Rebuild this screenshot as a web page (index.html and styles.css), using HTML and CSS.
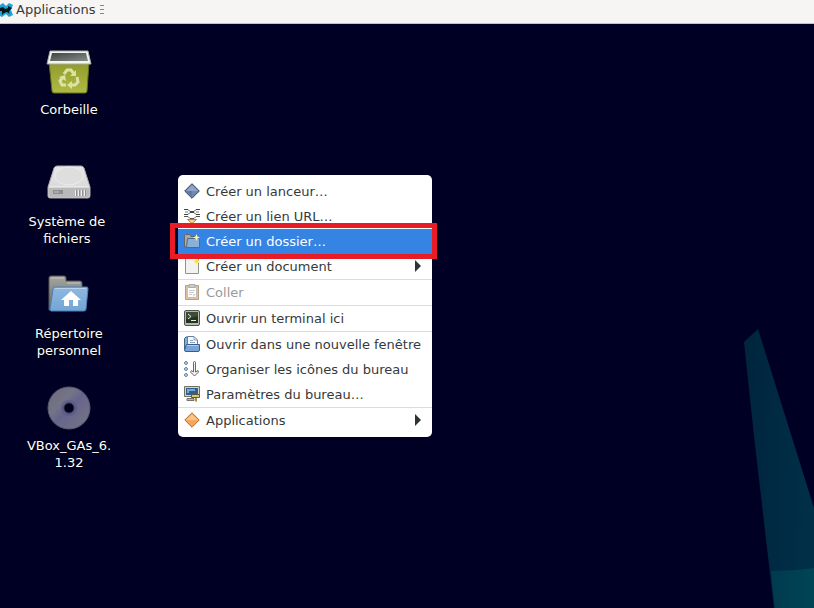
FILE: index.html
```html
<!DOCTYPE html>
<html lang="fr">
<head>
  <meta charset="UTF-8" />
  <title>Bureau</title>
  <link rel="stylesheet" href="styles.css">
</head>
<body>

  <!-- Wallpaper -->
  <svg class="wallpaper" viewBox="0 0 70 280" aria-hidden="true">
    <defs>
      <linearGradient id="fin" x1="0" y1="0" x2="1" y2="0.1">
        <stop offset="0.1" stop-color="#00253f" />
        <stop offset="1" stop-color="#003048" />
      </linearGradient>
      <linearGradient id="fin-base" x1="0" y1="0" x2="1" y2="0">
        <stop offset="0" stop-color="#003a50" />
        <stop offset="1" stop-color="#004555" />
      </linearGradient>
    </defs>
    <path d="M14 1 0 14 10 108 30 280H70V180Z" fill="url(#fin)" />
    <path d="M27 243Q50 243 70 240V280H31Z" fill="url(#fin-base)" />
  </svg>

  <!-- Panel -->
  <header class="panel">
    <button class="panel-button" type="button">
      <svg class="panel-logo" viewBox="0 0 13 16" aria-hidden="true">
        <path d="M0 3 3 1 6 4 9 1 13 3 11 8 13 13 9 15 6 12 2 15 0 14Z" fill="#1ba5d8" />
        <path d="M0 6 3 5 5 7 8 6 8 4 10 5 12 6 10 8 9 10 10 12 7 10 4 11 2 13 2 9 0 9Z" fill="#07151d" />
      </svg>
      Applications
    </button>
    <svg class="panel-handle" viewBox="0 0 4 9" aria-hidden="true">
      <path d="M0 .5H4M0 4.5H4M0 8.5H4" stroke="#888" />
    </svg>
  </header>

  <!-- Desktop icons -->
  <main class="desktop">
    <button class="desktop-icon" type="button">
      <svg viewBox="0 0 48 48" aria-hidden="true">
        <defs>
          <linearGradient id="bin" x1="0" y1="0" x2="0" y2="1">
            <stop offset="0" stop-color="#8f9a2c" />
            <stop offset="1" stop-color="#b0bb45" />
          </linearGradient>
          <linearGradient id="bin-inside" x1="0" y1="0" x2="1" y2="1">
            <stop offset="0" stop-color="#3f4542" />
            <stop offset="1" stop-color="#858c89" />
          </linearGradient>
        </defs>
        <path d="M4 14H44L42 43Q42 45 40 45H9Q7 45 7 43Z" fill="url(#bin)" stroke="#63701b" />
        <path d="M5 3H43L46 16H2Z" fill="#f3f4ed" stroke="#a7aa9e" />
        <path d="M7 5H41L43 13H5Z" fill="url(#bin-inside)" />
        <g fill="none" stroke="#dbe2a4" stroke-width="3">
          <path d="M19 26 22 22H26L29 26" />
          <path d="M32 29 33 34 30 37H26" />
          <path d="M21 37H17L15 33 18 29" />
        </g>
        <path d="M31 22V28H25ZM27 33V41L22 37ZM14 29 20 27 21 33Z" fill="#dbe2a4" />
      </svg>
      <span class="desktop-label">Corbeille</span>
    </button>

    <button class="desktop-icon" type="button">
      <svg viewBox="0 0 48 48" aria-hidden="true">
        <defs>
          <linearGradient id="disk" x1="0" y1="0" x2="0" y2="1">
            <stop offset="0" stop-color="#e6e6e6" />
            <stop offset="1" stop-color="#d4d4d4" />
          </linearGradient>
        </defs>
        <path d="M12 6H36Q38 6 39 8L45 27V36Q45 38 43 38H5Q3 38 3 36V27L9 8Q10 6 12 6Z" fill="url(#disk)" stroke="#aaa" />
        <ellipse cx="24" cy="16" rx="14" ry="9" fill="#dedede" stroke="#ececec" />
        <path d="M4 27H44V35Q44 37 42 37H6Q4 37 4 35Z" fill="#b9b9b9" />
        <path d="M4 27H44" stroke="#f6f6f6" />
        <path d="M8 30H18V34H8Z" fill="#8f8f8f" />
        <path d="M9 32H14" stroke="#c4c4c4" />
        <path d="M30.5 30V36M33.5 30V36M36.5 30V36M39.5 30V36" stroke="#f0f0f0" />
        <path d="M31.500 30V36M34.500 30V36M37.500 30V36M40.500 30V36" stroke="#8e8e8e" />
      </svg>
      <span class="desktop-label">Système de&nbsp;<br>fichiers&nbsp;</span>
    </button>

    <button class="desktop-icon" type="button">
      <svg viewBox="0 0 48 48" aria-hidden="true">
        <defs>
          <linearGradient id="home-front" x1="0" y1="0" x2="0" y2="1">
            <stop offset="0" stop-color="#8fb8de" />
            <stop offset="1" stop-color="#74a5d6" />
          </linearGradient>
          <linearGradient id="home-back" x1="0" y1="0" x2="0" y2="1">
            <stop offset="0" stop-color="#a6a6a2" />
            <stop offset="1" stop-color="#666864" />
          </linearGradient>
        </defs>
        <path d="M4 38V6Q4 4 6 4H19Q21 4 21 6V9H35Q37 9 37 11V36Z" fill="url(#home-back)" stroke="#555753" />
        <path d="M6 6H19M22 11H35" stroke="#c4c5c1" />
        <path d="M10 15H42Q43 15 43 17L41 37Q41 39 39 39H6Q5 39 5 37L8 17Q8 15 10 15Z" fill="url(#home-front)" stroke="#4a7fb5" />
        <path d="M10 16.5H41" stroke="#b9d3ed" />
        <path d="M26 19 36 28H33V34H28V28H24V34H19V28H16Z" fill="#fff" />
      </svg>
      <span class="desktop-label">Répertoire<br>personnel</span>
    </button>

    <button class="desktop-icon" type="button">
      <svg viewBox="0 0 48 48" aria-hidden="true">
        <defs>
          <linearGradient id="disc" x1="0" y1="0" x2="1" y2="1">
            <stop offset="0" stop-color="#6b6b7d" />
            <stop offset=".35" stop-color="#747486" />
            <stop offset=".5" stop-color="#67648c" />
            <stop offset="1" stop-color="#777785" />
          </linearGradient>
        </defs>
        <circle cx="24" cy="24" r="21" fill="url(#disc)" stroke="#5a5a68" />
        <circle cx="24" cy="24" r="8" fill="#57568a" opacity=".6" />
        <circle cx="24" cy="24" r="5" fill="#00001d" stroke="#34344e" />
      </svg>
      <span class="desktop-label">VBox_GAs_6.<br>1.32</span>
    </button>
  </main>

  <!-- Context menu -->
  <div class="menu" role="menu">
    <button class="menu-item" type="button" role="menuitem">
      <svg viewBox="0 0 16 16" aria-hidden="true">
        <path d="M8 .7 15.3 8 8 15.3 .7 8Z" fill="#7087b0" stroke="#34425f" />
        <path d="M8 2 14 8H2Z" fill="#8fa4c8" />
        <path d="M8 8V14L2 8Z" fill="#6078a3" />
      </svg>
      <span>Créer un lanceur…</span>
    </button>
    <button class="menu-item" type="button" role="menuitem">
      <svg viewBox="0 0 16 16" aria-hidden="true">
        <path d="M0 1.5H4L6 3.5H10L12 1.5H16M0 6.500H4L6 4.500H10L12 6.500H16" fill="none" stroke="#444843" />
        <path d="M0 8.5H4L6 10.5H10L12 8.5H16" fill="none" stroke="#555" />
        <path d="M1 4H4M12 4H15" stroke="#777b74" />
        <path d="M3.5 11.5H12.5L8 15.5Z" fill="#f8d49b" stroke="#d87713" />
      </svg>
      <span>Créer un lien URL…</span>
    </button>
    <button class="menu-item selected" type="button" role="menuitem">
      <svg viewBox="0 0 16 16" aria-hidden="true">
        <path d="M.5 14V2.5Q.5 1.500 1.500 1.500H6L7 3.500H13.500V14Z" fill="#a9aaa6" stroke="#656762" />
        <path d="M3.5 5.5H15.5V14.5H2.5Z" fill="#88b0d8" stroke="#4e6c8d" />
        <path d="M12.5 1 13.5 3.5 16 4.5 13.5 5.5 12.5 8 11.5 5.5 9 4.5 11.5 3.5Z" fill="#fff7ad" />
      </svg>
      <span>Créer un dossier…</span>
    </button>
    <button class="menu-item" type="button" role="menuitem" aria-haspopup="menu">
      <svg viewBox="0 0 16 16" aria-hidden="true">
        <path d="M1.5 .5H14.5V15.5H1.5Z" fill="#f2f2f0" stroke="#92948f" />
        <path d="M12.5 0 13.5 2.5 16 3.5 13.5 4.5 12.5 7 11.5 4.5 9 3.5 11.5 2.5Z" fill="#f8df32" stroke="#fff2a0" />
      </svg>
      <span>Créer un document</span>
      <i class="menu-arrow"></i>
    </button>
    <hr class="menu-separator">
    <button class="menu-item" type="button" role="menuitem" disabled>
      <svg viewBox="0 0 16 16" aria-hidden="true">
        <path d="M1.5 1.5H14.5V15.5H1.5Z" fill="#c39b62" stroke="#8f6228" />
        <path d="M3.5 3.5H12.5V13.5H3.5Z" fill="#fff" stroke="#999" />
        <path d="M5 .5H11V3.5H5Z" fill="#aaa" stroke="#777" />
        <path d="M5 6.5H11M5 8.5H10M5 10.5H8" stroke="#aaa" />
        <path d="M9 13V10H12Z" fill="#bbb" />
      </svg>
      <span>Coller</span>
    </button>
    <hr class="menu-separator">
    <button class="menu-item" type="button" role="menuitem">
      <svg viewBox="0 0 16 16" aria-hidden="true">
        <rect x=".5" y=".5" width="15" height="15" rx="1.5" fill="#b5b8ae" stroke="#50534c" />
        <path d="M2 2H14V13H2Z" fill="#243322" />
        <path d="M2 2H14V6L2 9Z" fill="#3c4c37" />
        <path d="M4 4 7 6.5 4 9M7 10.5H12" fill="none" stroke="#e7f0dd" />
      </svg>
      <span>Ouvrir un terminal ici</span>
    </button>
    <hr class="menu-separator">
    <button class="menu-item" type="button" role="menuitem">
      <svg viewBox="0 0 16 16" aria-hidden="true">
        <path d="M.5 13V2.5L2 1H5V13Z" fill="#8aaed3" stroke="#3d648f" />
        <path d="M3.5 .5H10L13.5 4V12H3.5Z" fill="#f5f7fa" stroke="#617f9f" />
        <path d="M10 .5V4H13.5M6 4.5H9M6 6.5H11" fill="none" stroke="#8da5bf" />
        <path d="M2.5 8.5H15.5V14Q15.5 15.5 14 15.5H2Q.5 15.5 .5 14Z" fill="#79a5d6" stroke="#345f91" />
        <path d="M3 9.5H14.5" stroke="#b3cee9" />
      </svg>
      <span>Ouvrir dans une nouvelle fenêtre</span>
    </button>
    <button class="menu-item" type="button" role="menuitem">
      <svg viewBox="0 0 16 16" aria-hidden="true">
        <g fill="#fff" stroke="#426f94">
          <circle cx="2" cy="2" r="1.400" />
          <circle cx="2" cy="8" r="1.400" />
          <circle cx="2" cy="14" r="1.400" />
        </g>
        <path d="M9.5 1.5Q9.5 .5 10.5 .5T11.5 1.5V11L14 9.5 14.5 11 10.5 15 6.5 11 7.500 9.500 9.500 11Z" fill="#f4f4f3" stroke="#666963" />
      </svg>
      <span>Organiser les icônes du bureau</span>
    </button>
    <button class="menu-item" type="button" role="menuitem">
      <svg viewBox="0 0 16 16" aria-hidden="true">
        <path d="M.5 .5H15.5V10.5H.5Z" fill="#d6d4c5" stroke="#706f61" />
        <path d="M2 2H14V9H2Z" fill="#31608f" />
        <path d="M3 3H11V5H5V7H3Z" fill="#7aa8ce" />
        <path d="M3 12.5H10V14.5H3Z" fill="#b7b6a8" stroke="#75746a" />
        <path d="M7.5 8.5H15.5V11.5H7.5Z" fill="#d9c678" stroke="#5b593e" />
        <path d="M11 12H13V15.5H11Z" fill="#a98d37" />
      </svg>
      <span>Paramètres du bureau…</span>
    </button>
    <hr class="menu-separator">
    <button class="menu-item" type="button" role="menuitem" aria-haspopup="menu">
      <svg viewBox="0 0 16 16" aria-hidden="true">
        <path d="M8 .8 15.2 8 8 15.2 .8 8Z" fill="#f3a85c" stroke="#b96a25" />
        <path d="M8 2.300 13.700 8H2.300Z" fill="#f9c58c" />
      </svg>
      <span>Applications</span>
      <i class="menu-arrow"></i>
    </button>
    <div class="highlight"></div>
  </div>

</body>
</html>
```

FILE: styles.css
```css
body {
  margin: 0;
  min-height: 100vh;
  overflow: hidden;
  background-color: #000025;
  color: #fff;
  font-family: "DejaVu Sans", sans-serif;
  font-size: 13px;
}

button {
  border: 0;
  background: none;
  font: inherit;
  color: inherit;
}

svg {
  display: block;
  flex-shrink: 0;
}

/* Wallpaper shape in the lower right corner */
.wallpaper {
  position: fixed;
  right: 0;
  bottom: 0;
  width: 70px;
  height: 280px;
}

/* Top panel */
.panel {
  position: relative;
  display: flex;
  align-items: center;
  gap: 5px;
  height: 24px;
  padding-bottom: 4px;
  box-sizing: border-box;
  background-color: #f6f5f4;
  border-bottom: 1px solid #c4c2c4;
  color: #36393b;
}

.panel-button {
  display: flex;
  align-items: center;
  gap: 3px;
  padding: 0;
}

.panel-logo {
  width: 13px;
  height: 16px;
}

.panel-handle {
  width: 4px;
  height: 9px;
}

/* Desktop icons, one column */
.desktop {
  display: grid;
  grid-template-columns: 112px;
  grid-auto-rows: 112px;
  padding: 24px 13px;
}

.desktop-icon {
  display: flex;
  flex-direction: column;
  align-items: center;
  gap: 5px;
  padding: 0;
}

.desktop-icon svg {
  width: 48px;
  height: 48px;
}

.desktop-label {
  line-height: 17px;
  text-align: center;
  text-shadow: 1px 1px 1px #000;
}

/* Context menu */
.menu {
  position: absolute;
  left: 178px;
  top: 175px;
  display: flex;
  flex-direction: column;
  min-width: 254px;
  padding: 4px 0;
  box-sizing: border-box;
  background-color: #fff;
  border-radius: 5px;
  color: #36393b;
}

.menu-item {
  display: flex;
  align-items: center;
  gap: 6px;
  height: 25px;
  padding: 0 11px 1px 6px;
  text-align: left;
  white-space: nowrap;
}

.menu-item svg {
  width: 16px;
  height: 16px;
}

.menu-item.selected {
  background-color: #3584e4;
  color: #fff;
}

.menu-item:disabled {
  color: #999;
}

.menu-item:disabled svg {
  opacity: 0.6;
}

.menu-arrow {
  margin-left: auto;
  border: 6px solid transparent;
  border-left-color: #2e3436;
  border-right-width: 0;
}

.menu-separator {
  width: 100%;
  height: 1px;
  margin: 0;
  border: 0;
  background-color: #dcdcdc;
}

/* Red frame around the selected entry */
.highlight {
  position: absolute;
  left: -8px;
  right: -5px;
  top: 48px;
  height: 26px;
  border: 5px solid #e81c27;
  pointer-events: none;
}
```
